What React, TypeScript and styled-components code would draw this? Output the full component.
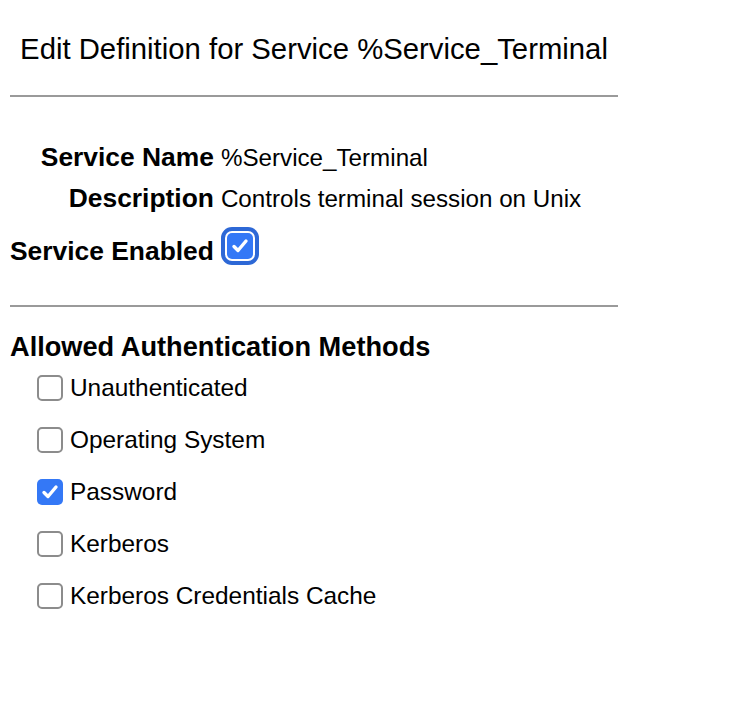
import React, { useState } from 'react';
import styled, { createGlobalStyle } from 'styled-components';

const GlobalStyle = createGlobalStyle`
  html, body {
    margin: 0;
    padding: 0;
    background: #ffffff;
  }
  body {
    font-family: "Liberation Sans", Arial, sans-serif;
    color: #000;
  }
`;

interface Method {
  id: string;
  label: string;
  checked: boolean;
}

const initialMethods: Method[] = [
  { id: 'unauth', label: 'Unauthenticated', checked: false },
  { id: 'os', label: 'Operating System', checked: false },
  { id: 'password', label: 'Password', checked: true },
  { id: 'kerberos', label: 'Kerberos', checked: false },
  { id: 'kcc', label: 'Kerberos Credentials Cache', checked: false },
];

const Check: React.FC<{ checked: boolean; focused?: boolean; onClick?: () => void }> = ({ checked, focused, onClick }) => (
  <Box $checked={checked} $focused={focused} onClick={onClick} role="checkbox" aria-checked={checked}>
    {checked && (
      <svg width="20" height="20" viewBox="0 0 20 20">
        <path d="M4 10.5 L8 14.5 L16 5" fill="none" stroke="#fff" strokeWidth="3.4" strokeLinecap="round" strokeLinejoin="round" />
      </svg>
    )}
  </Box>
);

const App: React.FC = () => {
  const [enabled, setEnabled] = useState(true);
  const [methods, setMethods] = useState(initialMethods);

  const toggle = (id: string) =>
    setMethods(ms => ms.map(m => (m.id === id ? { ...m, checked: !m.checked } : m)));

  return (
    <Page>
      <GlobalStyle />
      <Title>Edit Definition for Service %Service_Terminal</Title>
      <Rule />

      <FieldTable>
        <tbody>
          <tr>
            <Label>Service Name</Label>
            <Value>%Service_Terminal</Value>
          </tr>
          <tr>
            <Label>Description</Label>
            <Value>Controls terminal session on Unix</Value>
          </tr>
          <EnabledRow>
            <Label>Service Enabled</Label>
            <CheckCell>
              <Check checked={enabled} focused onClick={() => setEnabled(!enabled)} />
            </CheckCell>
          </EnabledRow>
        </tbody>
      </FieldTable>

      <Rule />

      <SectionTitle>Allowed Authentication Methods</SectionTitle>
      <MethodList>
        {methods.map(m => (
          <MethodRow key={m.id} onClick={() => toggle(m.id)}>
            <Check checked={m.checked} />
            <span>{m.label}</span>
          </MethodRow>
        ))}
      </MethodList>
    </Page>
  );
};

const Page = styled.div`
  width: 608px;
  padding: 0 10px;
`;

const Title = styled.h2`
  margin: 0;
  padding-top: 32px;
  height: 54px;
  text-align: center;
  font-size: 29.3px;
  font-weight: normal;
  line-height: 34px;
`;

const Rule = styled.div`
  height: 2px;
  background: #9a9a9a;
  margin-top: 9px;
`;

const FieldTable = styled.table`
  border-collapse: collapse;
  margin-top: 40px;
  margin-bottom: 22px;
`;

const Label = styled.td`
  text-align: right;
  font-weight: bold;
  font-size: 26.4px;
  padding: 0;
  height: 41px;
  white-space: nowrap;
  vertical-align: middle;
`;

const Value = styled.td`
  font-size: 24.2px;
  padding: 0 0 0 7px;
  vertical-align: middle;
`;

const CheckCell = styled.td`
  padding: 14px 0 0 7px;
  vertical-align: top;
  line-height: 0;
`;

const EnabledRow = styled.tr`
  td {
    height: 64px;
    box-sizing: border-box;
  }
`;

const Box = styled.span<{ $checked: boolean; $focused?: boolean }>`
  display: inline-flex;
  align-items: center;
  justify-content: center;
  box-sizing: border-box;
  width: 26px;
  height: 26px;
  flex: none;
  vertical-align: middle;
  border-radius: 5px;
  background: ${p => (p.$checked ? '#3478f6' : '#fff')};
  border: ${p => (p.$checked ? 'none' : '2px solid #8c8c8c')};
  box-shadow: ${p => (p.$focused ? '0 0 0 2px #fff, 0 0 0 6px #2d68d6' : 'none')};
  margin-left: ${p => (p.$focused ? '6px' : '0')};
  cursor: pointer;
`;

const SectionTitle = styled.div`
  margin-top: 25px;
  font-size: 27.2px;
  font-weight: bold;
  line-height: 30px;
`;

const MethodList = styled.div`
  display: flex;
  flex-direction: column;
  padding-left: 27px;
`;

const MethodRow = styled.div`
  display: flex;
  align-items: center;
  gap: 7px;
  height: 52px;
  font-size: 24.4px;
  cursor: pointer;
`;

export default App;
